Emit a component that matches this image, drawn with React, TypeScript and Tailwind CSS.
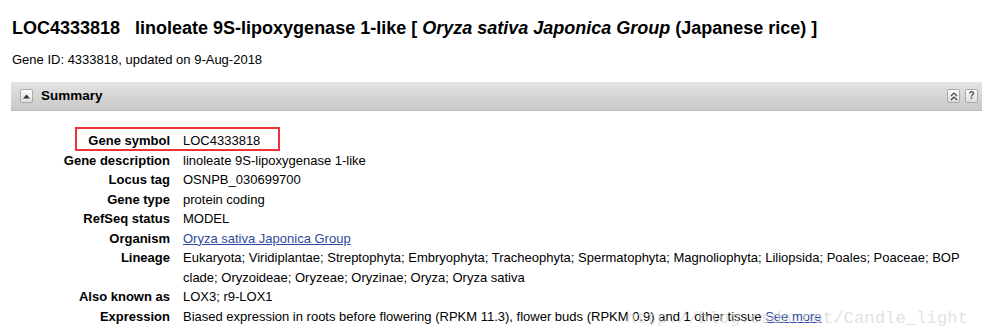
const rows: { label: string; value: React.ReactNode }[] = [
  { label: "Gene description", value: "linoleate 9S-lipoxygenase 1-like" },
  { label: "Locus tag", value: "OSNPB_030699700" },
  { label: "Gene type", value: "protein coding" },
  { label: "RefSeq status", value: "MODEL" },
  {
    label: "Organism",
    value: (
      <a href="#" className="text-[#2e4a9e] underline">
        Oryza sativa Japonica Group
      </a>
    ),
  },
  {
    label: "Lineage",
    value:
      "Eukaryota; Viridiplantae; Streptophyta; Embryophyta; Tracheophyta; Spermatophyta; Magnoliophyta; Liliopsida; Poales; Poaceae; BOP clade; Oryzoideae; Oryzeae; Oryzinae; Oryza; Oryza sativa",
  },
  { label: "Also known as", value: "LOX3; r9-LOX1" },
  {
    label: "Expression",
    value: (
      <>
        Biased expression in roots before flowering (RPKM 11.3), flower buds (RPKM 0.9) and 1 other
        tissue{" "}
        <a href="#" className="text-[#2e4a9e] underline">
          See more
        </a>
      </>
    ),
  },
];

function IconBox({ children }: { children: React.ReactNode }) {
  return (
    <span className="grid h-[14px] w-[13px] place-items-center rounded-[2px] border border-[#a8a8a8] bg-gradient-to-b from-white to-[#dcdcdc]">
      {children}
    </span>
  );
}

function Row({ label, value }: { label: string; value: React.ReactNode }) {
  return (
    <div className="flex">
      <div className="w-[170px] shrink-0 text-right font-bold">{label}</div>
      <div className="ml-[13px] max-w-[792px]">{value}</div>
    </div>
  );
}

export default function App() {
  return (
    <div className="relative h-[336px] overflow-hidden bg-white font-['Liberation_Sans',Arial,sans-serif] text-black">
      <div className="px-3 pt-[17px]">
        <h1 className="text-[18px] font-bold leading-[22px]">
          LOC4333818<span className="ml-[15px]">linoleate 9S-lipoxygenase 1-like [ </span>
          <i>Oryza sativa Japonica Group</i> (Japanese rice) ]
        </h1>
        <p className="mt-[13px] text-[13px] leading-[16px]">Gene ID: 4333818, updated on 9-Aug-2018</p>
      </div>

      <div className="ml-[11px] mt-[14px] flex h-[29px] items-center border-b border-[#bdbdbd] bg-gradient-to-b from-[#e4e4e4] to-[#c8c8c8] pl-[9px] pr-[4px]">
        <IconBox>
          <svg width="7" height="5" viewBox="0 0 7 5">
            <path d="M0 4.5 L3.5 0.5 L7 4.5 Z" fill="#333" />
          </svg>
        </IconBox>
        <span className="ml-[8px] text-[13.5px] font-bold">Summary</span>
        <div className="ml-auto flex gap-[5px]">
          <IconBox>
            <svg width="8" height="9" viewBox="0 0 8 9" fill="none" stroke="#444" strokeWidth="1.2">
              <path d="M1 4 L4 1 L7 4" />
              <path d="M1 8 L4 5 L7 8" />
            </svg>
          </IconBox>
          <IconBox>
            <span className="text-[10px] font-bold leading-none text-[#555]">?</span>
          </IconBox>
        </div>
      </div>

      <div className="mt-[20px] text-[13px] leading-[19.5px]">
        <div className="relative">
          <Row label="Gene symbol" value="LOC4333818" />
          <div className="pointer-events-none absolute left-[75px] top-[-4px] h-[24px] w-[205px] border-2 border-[#ee3338]" />
        </div>
        {rows.map((r) => (
          <Row key={r.label} label={r.label} value={r.value} />
        ))}
      </div>

      <div className="pointer-events-none absolute bottom-[9px] right-[14px] font-['Liberation_Mono',monospace] text-[17.3px] leading-none text-[#d4d4d4]/70">
        http://blog.csdn.net/Candle_light
      </div>
    </div>
  );
}
